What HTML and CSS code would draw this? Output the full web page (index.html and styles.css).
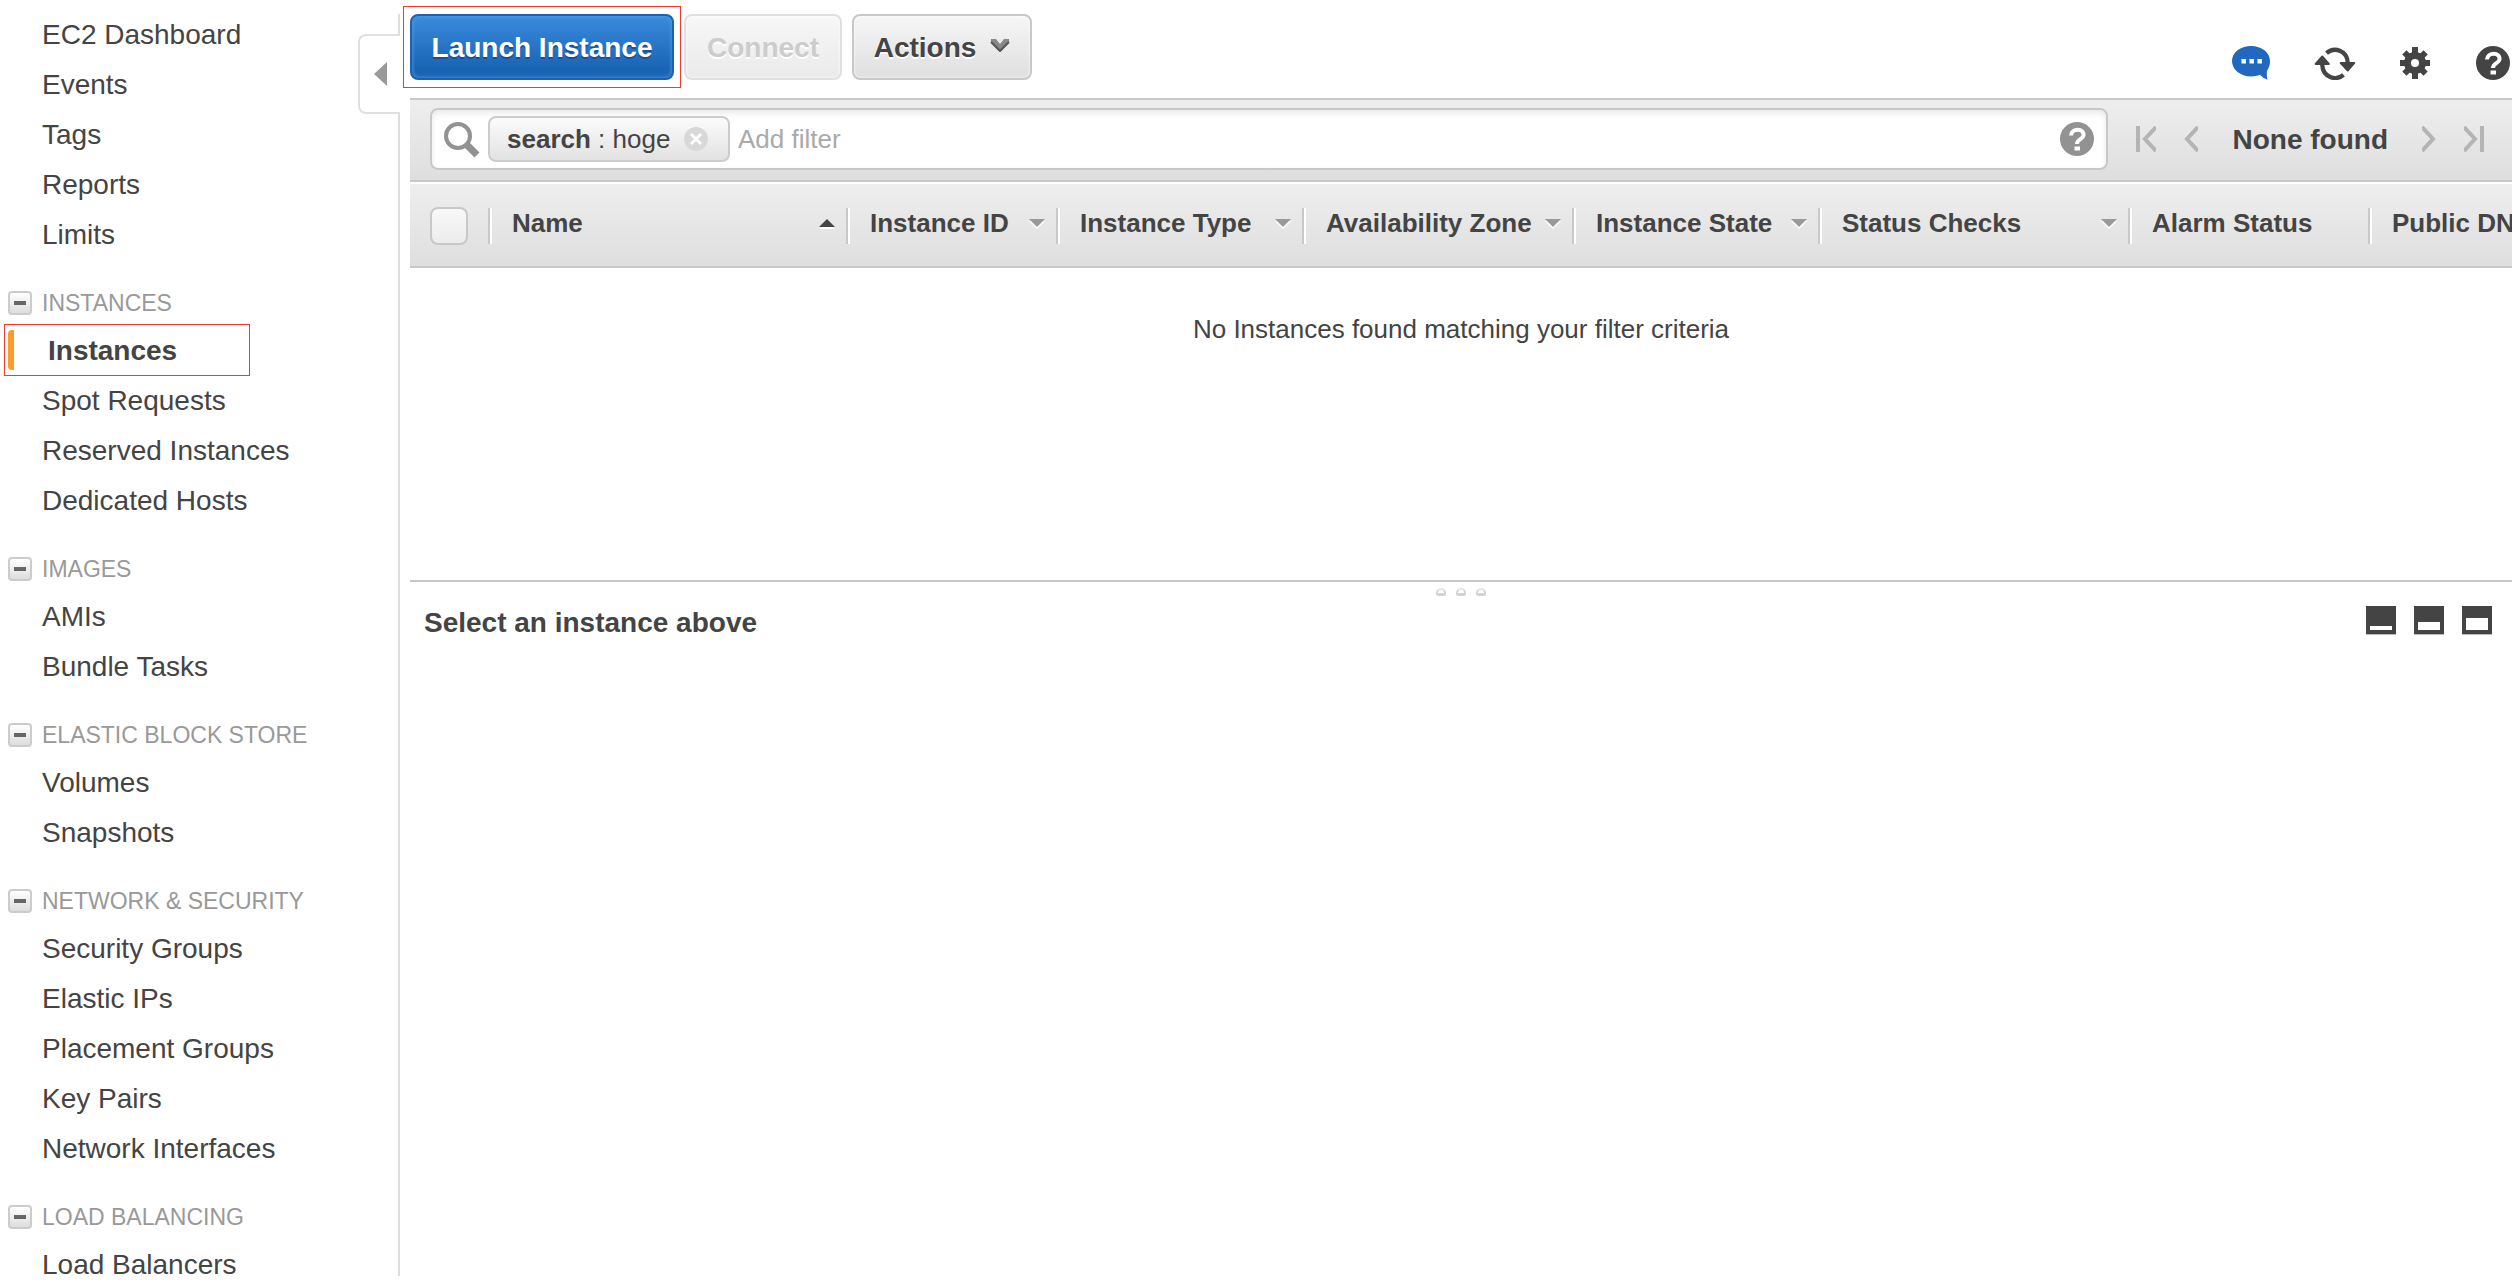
FILE: index.html
```html
<!DOCTYPE html>
<html lang="en">
<head>
<meta charset="utf-8">
<title>EC2 Management Console</title>
<link rel="stylesheet" href="styles.css">
</head>
<body>
<div class="app">
  <aside class="sidebar">
    <button class="collapse" type="button" aria-label="Collapse navigation">
      <svg width="13" height="24" viewBox="0 0 13 24"><path d="M13 0v24L0 12z" fill="#999"/></svg>
    </button>
    <nav class="nav">
      <ul class="nav-list">
        <li><a href="#">EC2 Dashboard</a></li>
        <li><a href="#">Events</a></li>
        <li><a href="#">Tags</a></li>
        <li><a href="#">Reports</a></li>
        <li><a href="#">Limits</a></li>
      </ul>
      <section class="group">
        <h2 class="group-title"><button class="toggle" type="button" aria-label="Collapse Instances"></button>INSTANCES</h2>
        <ul class="nav-list">
          <li class="current"><a href="#">Instances</a></li>
          <li><a href="#">Spot Requests</a></li>
          <li><a href="#">Reserved Instances</a></li>
          <li><a href="#">Dedicated Hosts</a></li>
        </ul>
      </section>
      <section class="group">
        <h2 class="group-title"><button class="toggle" type="button" aria-label="Collapse Images"></button>IMAGES</h2>
        <ul class="nav-list">
          <li><a href="#">AMIs</a></li>
          <li><a href="#">Bundle Tasks</a></li>
        </ul>
      </section>
      <section class="group">
        <h2 class="group-title"><button class="toggle" type="button" aria-label="Collapse Elastic Block Store"></button>ELASTIC BLOCK STORE</h2>
        <ul class="nav-list">
          <li><a href="#">Volumes</a></li>
          <li><a href="#">Snapshots</a></li>
        </ul>
      </section>
      <section class="group">
        <h2 class="group-title"><button class="toggle" type="button" aria-label="Collapse Network and Security"></button>NETWORK &amp; SECURITY</h2>
        <ul class="nav-list">
          <li><a href="#">Security Groups</a></li>
          <li><a href="#">Elastic IPs</a></li>
          <li><a href="#">Placement Groups</a></li>
          <li><a href="#">Key Pairs</a></li>
          <li><a href="#">Network Interfaces</a></li>
        </ul>
      </section>
      <section class="group">
        <h2 class="group-title"><button class="toggle" type="button" aria-label="Collapse Load Balancing"></button>LOAD BALANCING</h2>
        <ul class="nav-list">
          <li><a href="#">Load Balancers</a></li>
        </ul>
      </section>
    </nav>
  </aside>

  <main class="main">
    <header class="toolbar">
      <div class="highlight">
        <button class="btn btn-primary" type="button">Launch Instance</button>
      </div>
      <button class="btn btn-connect" type="button" disabled>Connect</button>
      <button class="btn btn-actions" type="button">Actions
        <svg width="20" height="14" viewBox="0 0 20 14"><path d="M1 1h5l4 5 4-5h5v3l-9 10L1 4z" fill="#888"/><path d="M1 4l9 9 9-9" fill="none" stroke="#555" stroke-width="2"/></svg>
      </button>
      <div class="tools">
        <button class="icon" type="button" aria-label="Feedback">
          <svg width="38" height="36" viewBox="0 0 38 36"><path d="M19 1C8.500 1 0 7.500 0 16s8.500 15.500 19 15.500c3.300 0 6.300-.6 9-1.700 2 2 4.500 4 7.500 5-.8-3-.8-6-.5-9 2-2.800 3-6 3-9.800C38 7.500 29.500 1 19 1z" fill="#2068c0"/><path d="M9.500 14h4.500v4.500H9.500zm8 0H22v4.500h-4.500zm8 0H30v4.500h-4.500z" fill="#fff"/></svg>
        </button>
        <button class="icon" type="button" aria-label="Refresh">
          <svg width="42" height="34" viewBox="0 0 44 36"><g fill="none" stroke="#444" stroke-width="4.500"><path d="M13 7.500C21 .5 35 4.500 35.500 18"/><path d="M31 30.500C23 37.500 9 33 8.500 20"/></g><path d="M28 18h14.500L35.500 26zM1.500 19L8.500 11l7 8z" fill="#444" stroke="#444" stroke-linejoin="round" stroke-width="2"/></svg>
        </button>
        <button class="icon" type="button" aria-label="Settings">
          <svg width="32" height="34" viewBox="0 0 32 34"><g fill="#444"><path d="M12 1h6v32h-6zM0 14h30v6H0z"/><path d="M12 2h6v30h-6z" transform="rotate(45 15 17)"/><path d="M12 2h6v30h-6z" transform="rotate(-45 15 17)"/><circle cx="15" cy="17" r="11"/></g><circle cx="15" cy="17" r="4" fill="#fff"/></svg>
        </button>
        <button class="icon" type="button" aria-label="Help">
          <svg width="34" height="34" viewBox="0 0 34 34"><circle cx="17" cy="17" r="17" fill="#444"/><path d="M11 13.500c.5-8 13.500-7.500 12.500 0-.6 4-6.500 3.500-6.500 8.500" fill="none" stroke="#fff" stroke-width="4"/><path d="M14.500 24.500h5.500v4h-5.500z" fill="#fff"/></svg>
        </button>
      </div>
    </header>

    <div class="filterbar">
      <div class="search">
        <svg class="search-icon" width="36" height="36" viewBox="0 0 36 36"><circle cx="14" cy="14" r="12" fill="none" stroke="#929292" stroke-width="4"/><path d="M22 22l11 11" stroke="#929292" stroke-width="7"/></svg>
        <span class="chip"><span><b>search</b> : hoge</span>
          <button class="icon" type="button" aria-label="Remove filter">
            <svg width="24" height="24" viewBox="0 0 24 24"><circle cx="12" cy="12" r="12" fill="#d8d8d8"/><path d="M7 7l10 10M17 7L7 17" stroke="#fff" stroke-width="3"/></svg>
          </button>
        </span>
        <input class="search-input" type="text" placeholder="Add filter" aria-label="Add filter">
        <button class="icon" type="button" aria-label="Search help">
          <svg width="34" height="34" viewBox="0 0 34 34"><circle cx="17" cy="17" r="17" fill="#929292"/><path d="M11 13.500c.5-8 13.500-7.500 12.500 0-.6 4-6.500 3.500-6.500 8.500" fill="none" stroke="#fff" stroke-width="4"/><path d="M14.500 24.500h5.500v4h-5.500z" fill="#fff"/></svg>
        </button>
      </div>
      <div class="pager">
        <button class="icon" type="button" aria-label="First page"><svg width="20" height="26" viewBox="0 0 20 26"><path d="M2 0v26M20 1L9 13l11 12" fill="none" stroke="#b4b4b4" stroke-width="4"/></svg></button>
        <button class="icon" type="button" aria-label="Previous page"><svg width="14" height="26" viewBox="0 0 14 26"><path d="M14 1L3 13l11 12" fill="none" stroke="#b4b4b4" stroke-width="4"/></svg></button>
        <span class="pager-text">None found</span>
        <button class="icon" type="button" aria-label="Next page"><svg width="14" height="26" viewBox="0 0 14 26"><path d="M0 1l11 12L0 25" fill="none" stroke="#b4b4b4" stroke-width="4"/></svg></button>
        <button class="icon" type="button" aria-label="Last page"><svg width="20" height="26" viewBox="0 0 20 26"><path d="M18 0v26M0 1l11 12L0 25" fill="none" stroke="#b4b4b4" stroke-width="4"/></svg></button>
      </div>
    </div>

    <div class="grid">
      <table class="table">
        <colgroup>
          <col class="c-check"><col class="c-name"><col class="c-id"><col class="c-type"><col class="c-zone"><col class="c-type"><col class="c-checks"><col class="c-alarm"><col>
        </colgroup>
        <thead>
          <tr>
            <th class="check-cell"><input class="check" type="checkbox" aria-label="Select all instances"></th>
            <th><div class="head">Name <i class="sort sort-up"></i></div></th>
            <th><div class="head">Instance ID <i class="sort"></i></div></th>
            <th><div class="head">Instance Type <i class="sort"></i></div></th>
            <th><div class="head">Availability Zone <i class="sort"></i></div></th>
            <th><div class="head">Instance State <i class="sort"></i></div></th>
            <th><div class="head">Status Checks <i class="sort"></i></div></th>
            <th><div class="head">Alarm Status</div></th>
            <th><div class="head">Public DNS</div></th>
          </tr>
        </thead>
        <tbody>
          <tr><td class="empty" colspan="9">No Instances found matching your filter criteria</td></tr>
        </tbody>
      </table>
    </div>

    <section class="detail">
      <div class="grip"><i></i><i></i><i></i></div>
      <div class="detail-head">
        <h1 class="detail-title">Select an instance above</h1>
        <div class="layouts">
          <button class="icon" type="button" aria-label="Small detail pane"><svg width="30" height="30" viewBox="0 0 30 30"><path d="M0 0h30v28H0z" fill="#444"/><path d="M4 20h22v4H4z" fill="#fff"/><path d="M0 28h30v1H0z" fill="#bbb"/></svg></button>
          <button class="icon" type="button" aria-label="Medium detail pane"><svg width="30" height="30" viewBox="0 0 30 30"><path d="M0 0h30v28H0z" fill="#444"/><path d="M4 16h22v8H4z" fill="#fff"/><path d="M0 28h30v1H0z" fill="#bbb"/></svg></button>
          <button class="icon" type="button" aria-label="Large detail pane"><svg width="30" height="30" viewBox="0 0 30 30"><path d="M0 0h30v28H0z" fill="#444"/><path d="M4 12h22v12H4z" fill="#fff"/><path d="M0 28h30v1H0z" fill="#bbb"/></svg></button>
        </div>
      </div>
    </section>
  </main>
</div>
</body>
</html>
```

FILE: styles.css
```css
* {
  box-sizing: border-box;
}

body {
  margin: 0;
  background: #fff;
  color: #444;
  font-family: "Liberation Sans", Arial, sans-serif;
  font-size: 26px;
}

button,
input {
  margin: 0;
  font-family: inherit;
}

svg {
  display: block;
}

.app {
  display: flex;
  gap: 10px;
  height: 100vh;
  padding: 14px 8px 8px 0;
  overflow: hidden;
}

/* Sidebar */

.sidebar {
  position: relative;
  flex: 0 0 400px;
  border-right: 2px solid #ddd;
}

.collapse {
  position: absolute;
  top: 20px;
  right: -2px;
  display: flex;
  align-items: center;
  width: 42px;
  height: 80px;
  padding: 0 0 0 14px;
  border: 2px solid #e0e0e0;
  border-right: 0;
  border-radius: 8px 0 0 8px;
  background: #fff;
}

.nav-list {
  display: flex;
  flex-direction: column;
  gap: 10px;
  margin: 0;
  padding: 0;
  list-style: none;
  font-size: 28px;
  line-height: 38px;
}

.nav-list li {
  height: 40px;
  padding: 2px 0 0 42px;
}

.nav-list a {
  color: inherit;
  text-decoration: none;
}

.nav-list .current {
  position: relative;
  margin-left: 8px;
  padding-left: 34px;
  border-left: 6px solid #ff9a2e;
  border-radius: 4px 0 0 4px;
  font-weight: bold;
}

.current::after,
.highlight::after {
  content: "";
  position: absolute;
  inset: -8px -7px;
  border: 1px solid #f03a2e;
  pointer-events: none;
}

.current::after {
  inset: -6px 148px -6px -10px;
}

.group {
  margin-top: 35px;
}

.group-title {
  display: flex;
  align-items: center;
  gap: 10px;
  margin: 0 0 13px;
  padding-left: 8px;
  color: #999;
  font-size: 23px;
  font-weight: normal;
  line-height: 28px;
}

.toggle {
  display: flex;
  align-items: center;
  justify-content: center;
  width: 24px;
  height: 24px;
  padding: 0;
  border: 2px solid #ccc;
  border-radius: 4px;
  background: linear-gradient(#fff, #ddd);
}

.toggle::before {
  content: "";
  width: 12px;
  height: 4px;
  background: #666;
}

/* Toolbar */

.main {
  display: flex;
  flex: 1;
  flex-direction: column;
  min-width: 0;
}

.toolbar {
  display: flex;
  gap: 10px;
  margin-bottom: 18px;
}

.highlight {
  position: relative;
}

.btn {
  display: flex;
  align-items: center;
  justify-content: center;
  gap: 14px;
  width: 180px;
  height: 66px;
  padding: 2px 0 0;
  border: 2px solid #c8c8c8;
  border-radius: 8px;
  background: linear-gradient(#f6f6f6, #dfdfdf);
  box-shadow: inset 0 0 3px #fff;
  color: #444;
  font-size: 28px;
  font-weight: bold;
  text-shadow: 0 2px 0 #fff;
}

.btn-primary {
  width: 264px;
  border-color: #1b62b2;
  background: linear-gradient(#3a8bdc, #1a64b4 85%);
  box-shadow: inset 0 0 4px #5aa0e6;
  color: #fff;
  text-shadow: 0 2px 0 #1a4f96;
}

.btn-connect {
  width: 158px;
  border-color: #e0e0e0;
  background: linear-gradient(#f7f7f7, #eaeaea);
  color: #ccc;
}

.btn-actions svg {
  margin-bottom: 6px;
}

.icon {
  flex: none;
  padding: 0;
  border: 0;
  background: none;
}

.tools {
  display: flex;
  align-items: center;
  gap: 44px;
  height: 66px;
  margin-left: auto;
  padding: 32px 2px 0 0;
}

/* Filter bar */

.filterbar {
  display: flex;
  align-items: center;
  height: 84px;
  margin-bottom: 2px;
  padding: 0 0 2px 20px;
  border: solid #c8c8c8;
  border-width: 2px 0;
  background: linear-gradient(#eee, #dedede);
}

.search {
  display: flex;
  flex: 1;
  align-items: center;
  height: 62px;
  padding: 0 12px;
  border: 2px solid #c8c8c8;
  border-radius: 8px;
  background: #fff;
  box-shadow: inset 0 3px 6px #e8e8e8;
}

.search-icon {
  margin: 2px 8px 0 0;
}

.chip {
  display: flex;
  align-items: center;
  justify-content: space-between;
  width: 242px;
  height: 46px;
  padding: 0 20px 0 17px;
  border: 2px solid #ccc;
  border-radius: 8px;
  background: linear-gradient(#fbfbfb, #e2e2e2);
}

.search-input {
  flex: 1;
  min-width: 0;
  height: 46px;
  padding: 0 8px;
  border: 0;
  background: none;
  color: inherit;
  font-size: 26px;
}

.search-input::placeholder {
  color: #aaa;
  opacity: 1;
}

.pager {
  display: flex;
  align-items: center;
  gap: 28px;
  padding: 0 28px;
}

.pager-text {
  padding: 2px 6px 0;
  font-size: 28px;
  font-weight: bold;
}

/* Instance grid */

.grid {
  height: 396px;
  overflow: hidden;
}

.table {
  width: 100%;
  border-collapse: collapse;
  table-layout: fixed;
}

.c-check { width: 78px; }
.c-name { width: 358px; }
.c-id { width: 210px; }
.c-type { width: 246px; }
.c-zone { width: 270px; }
.c-checks { width: 310px; }
.c-alarm { width: 240px; }

.table thead tr {
  height: 84px;
  background: linear-gradient(#eee, #dedede);
  box-shadow: inset 0 -2px 0 #c8c8c8;
}

.table th {
  padding: 0;
  overflow: hidden;
  text-align: left;
  white-space: nowrap;
}

.table .check-cell {
  padding-left: 20px;
}

.check {
  display: block;
  width: 38px;
  height: 38px;
  appearance: none;
  border: 2px solid #c8c8c8;
  border-radius: 8px;
  background: linear-gradient(#f8f8f8, #ececec);
}

.head {
  display: flex;
  align-items: center;
  justify-content: space-between;
  height: 36px;
  padding: 0 11px 6px 22px;
  border-left: 2px solid #c8c8c8;
  box-shadow: inset 2px 0 0 #fff;
  line-height: 30px;
}

.sort {
  border: 8px solid transparent;
  border-top-color: #999;
  border-bottom-width: 0;
  filter: drop-shadow(0 2px 0 #fff);
}

.sort-up {
  border-top-width: 0;
  border-bottom: 8px solid #444;
}

.table .empty {
  padding: 46px 0;
  line-height: 30px;
  text-align: center;
}

/* Detail pane */

.detail {
  border-top: 2px solid #c8c8c8;
}

.grip {
  display: flex;
  justify-content: center;
  gap: 10px;
  padding-top: 6px;
}

.grip i {
  width: 10px;
  height: 8px;
  border: 2px solid #d4d4d4;
  border-top-color: #e4e4e4;
  border-bottom-width: 3px;
  border-radius: 5px 5px 2px 2px;
}

.detail-head {
  display: flex;
  align-items: flex-start;
  justify-content: space-between;
  padding: 10px 20px 0 14px;
}

.detail-title {
  margin: 0;
  font-size: 28px;
  line-height: 34px;
}

.layouts {
  display: flex;
  gap: 18px;
}
```
